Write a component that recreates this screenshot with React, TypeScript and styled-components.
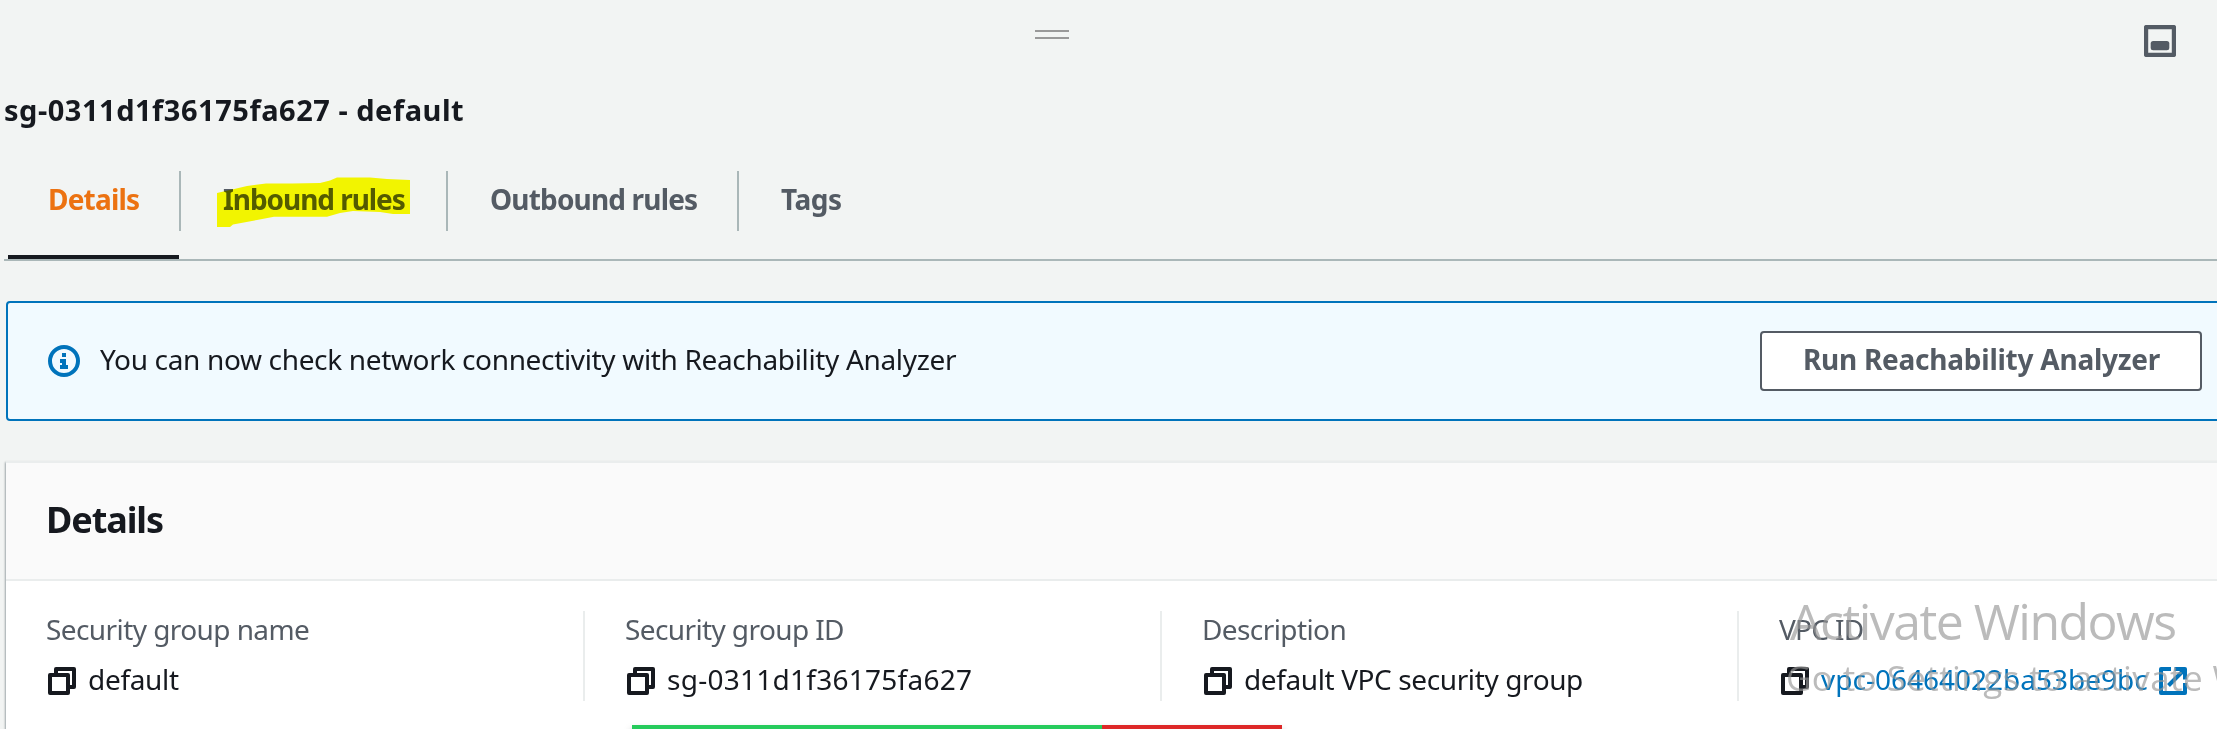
import React from 'react';
import styled, { createGlobalStyle } from 'styled-components';

const GlobalStyle = createGlobalStyle`
  *, *::before, *::after { box-sizing: border-box; }
  body { margin: 0; background: #f2f4f3; overflow: hidden; }
`;

const Page = styled.main`
  position: relative;
  width: 2217px;
  height: 729px;
  overflow: hidden;
  background: #f2f4f3;
  color: #16191f;
  font-family: 'Noto Sans', 'Open Sans', sans-serif;
  font-size: 28px;
  line-height: 40px;
  white-space: nowrap;
`;

const PanelBar = styled.header`
  display: flex;
  justify-content: space-between;
  align-items: flex-start;
  height: 90px;
  padding: 25px 41px 0 1035px;
`;

const DragHandle = styled.div`
  width: 34px;
  height: 9px;
  margin-top: 5px;
  border: solid #999;
  border-width: 2px 0;
`;

const Title = styled.h1`
  margin: 0;
  padding-left: 4px;
  font-size: 29px;
  font-weight: 700;
  line-height: 40px;
  letter-spacing: 0.52px;
`;

const TabList = styled.nav`
  display: flex;
  height: 131px;
  margin-left: 4px;
  padding: 41px 0 0 4px;
  border-bottom: 2px solid #aab7b8;
`;

const Tab = styled.div<{ $width: number; $active?: boolean }>`
  position: relative;
  width: ${(p) => p.$width}px;
  height: 88px;
  color: ${(p) => (p.$active ? '#ec7211' : '#545b64')};

  &::after {
    content: '';
    display: ${(p) => (p.$active ? 'block' : 'none')};
    width: 171px;
    height: 4px;
    margin-top: 24px;
    background: #16191f;
  }
`;

const TabLabel = styled.div<{ $inset: number; $spacing: number; $last?: boolean }>`
  height: 60px;
  padding: 8px 0 0 ${(p) => p.$inset}px;
  border-right: ${(p) => (p.$last ? 'none' : '2px solid #aab7b8')};
  font-weight: 700;
  letter-spacing: ${(p) => p.$spacing}px;
`;

const Marker = styled.svg`
  position: absolute;
  left: 36px;
  top: 6px;
  mix-blend-mode: multiply;
`;

const Alert = styled.section`
  display: flex;
  align-items: center;
  height: 120px;
  margin: 40px -4px 0 6px;
  padding: 0 17px 0 40px;
  border: 2px solid #0073bb;
  border-radius: 4px;
  background: #f1faff;
`;

const AlertText = styled.p`
  flex: 1;
  margin: 0 0 4px 20px;
  letter-spacing: -0.34px;
`;

const Button = styled.button`
  width: 442px;
  height: 60px;
  padding: 0 0 4px 1px;
  border: 2px solid #545b64;
  border-radius: 4px;
  background: #fff;
  color: #545b64;
  font: 700 28px/40px 'Noto Sans', 'Open Sans', sans-serif;
  letter-spacing: -0.24px;
`;

const Card = styled.section`
  height: 300px;
  margin: 40px -4px 0 6px;
  border-top: 2px solid #eaeded;
  background: #fff;
  box-shadow: 0 2px 2px rgba(0, 28, 36, 0.3), -1px 1px 2px rgba(0, 28, 36, 0.25);
`;

const CardHeader = styled.div`
  height: 118px;
  padding: 33px 0 0 40px;
  border-bottom: 2px solid #eaeded;
  background: #fafafa;
`;

const CardTitle = styled.h2`
  margin: 0;
  font-size: 36px;
  font-weight: 700;
  line-height: 48px;
  letter-spacing: -1.09px;
`;

const Fields = styled.div`
  display: grid;
  grid-template-columns: 579px 577px 577px 1fr;
  height: 90px;
  margin-top: 30px;
`;

const Field = styled.div`
  padding-left: 40px;
  border-right: 2px solid #eaeded;
  &:last-child { border-right: none; }
`;

const FieldLabel = styled.div<{ $spacing: number }>`
  height: 40px;
  margin-top: -2px;
  color: #545b64;
  letter-spacing: ${(p) => p.$spacing}px;
`;

const FieldValue = styled.div<{ $spacing: number; $link?: boolean }>`
  display: flex;
  align-items: flex-start;
  margin-top: 10px;
  color: ${(p) => (p.$link ? '#0073bb' : '#16191f')};
  letter-spacing: ${(p) => p.$spacing}px;

  svg { flex: none; margin-top: 8px; }
`;

const ValueText = styled.span`
  margin: 0 11px 0 12px;
`;

const StatusStrip = styled.div`
  position: absolute;
  left: 632px;
  top: 725px;
  width: 650px;
  height: 14px;
  display: grid;
  grid-template-columns: 470px 180px;
  box-shadow: 0 6px 8px rgba(0, 0, 0, 0.4);
`;

const Segment = styled.div<{ $color: string }>`
  background: ${(p) => p.$color};
`;

const Watermark = styled.aside`
  position: absolute;
  left: 1790px;
  top: 588px;
  color: rgba(150, 150, 150, 0.65);
  font-family: 'Open Sans', 'Noto Sans', sans-serif;
`;

const WatermarkTitle = styled.div`
  font-size: 50px;
  font-weight: 400;
  line-height: 66px;
  letter-spacing: -1.55px;
`;

const WatermarkHint = styled.div`
  margin-left: -4px;
  font-size: 35px;
  font-weight: 400;
  line-height: 48px;
  letter-spacing: 0.41px;
`;

const CopyIcon = () => (
  <svg width="30" height="28" viewBox="-2 0 30 28" fill="#fff" stroke="#16191f" strokeWidth="4" strokeLinejoin="round">
    <rect x="8" y="2" width="18" height="18" />
    <rect x="2" y="8" width="18" height="18" />
  </svg>
);

const ExternalIcon = () => (
  <svg width="28" height="28" viewBox="0 0 28 28" fill="none" stroke="#0073bb" strokeWidth="4" strokeLinejoin="round">
    <path d="M12 2H2V26H26V16" />
    <path d="M15.5 2H26V12.5" />
    <path d="M25 3L9.5 18.5" />
  </svg>
);

const InfoIcon = () => (
  <svg width="32" height="32" viewBox="0 0 32 32" fill="#0073bb">
    <circle cx="16" cy="16" r="14" fill="none" stroke="#0073bb" strokeWidth="4" />
    <path d="M14 8h4v4h-4zM12 14h6v6h2v4h-8v-4h2v-2h-2z" />
  </svg>
);

const SplitPanelIcon = () => (
  <svg width="32" height="32" viewBox="0 0 32 32" fill="#545b64">
    <rect x="2" y="2" width="28" height="28" rx="1" fill="none" stroke="#545b64" strokeWidth="4.4" />
    <rect x="6.7" y="16" width="18.6" height="9.3" rx="2.5" />
  </svg>
);

const tabs = [
  { label: 'Details', width: 173, inset: 40, spacing: -0.81, active: true },
  { label: 'Inbound rules', width: 267, inset: 42, spacing: -1.06, marked: true },
  { label: 'Outbound rules', width: 291, inset: 42, spacing: -0.83 },
  { label: 'Tags', width: 140, inset: 42, spacing: -0.46, last: true },
];

const fields = [
  { label: 'Security group name', labelSpacing: -0.58, value: 'default', spacing: -0.31 },
  { label: 'Security group ID', labelSpacing: -0.61, value: 'sg-0311d1f36175fa627', spacing: 0.26 },
  { label: 'Description', labelSpacing: -0.59, value: 'default VPC security group', spacing: -0.39 },
  { label: 'VPC ID', labelSpacing: -0.7, value: 'vpc-06464022ba53be9bc', spacing: 0, link: true },
];

export default function App() {
  return (
    <Page>
      <GlobalStyle />
      <PanelBar>
        <DragHandle />
        <SplitPanelIcon />
      </PanelBar>
      <Title>sg-0311d1f36175fa627 - default</Title>
      <TabList>
        {tabs.map((t) => (
          <Tab key={t.label} $width={t.width} $active={t.active}>
            <TabLabel $inset={t.inset} $spacing={t.spacing} $last={t.last}>{t.label}</TabLabel>
            {t.marked && (
              <Marker width="193" height="50" viewBox="0 0 193 50">
                <path
                  fill="#ffff00"
                  d="M0 16L13 13L30 9L49 6.5H75L103 6L113 3.5L120 0.5H153L170 2L193 3V37H176L163 35L136 34L123 36L110 39.7H57L40 43L16 47.5L13 50H0Z"
                />
              </Marker>
            )}
          </Tab>
        ))}
      </TabList>
      <Alert>
        <InfoIcon />
        <AlertText>You can now check network connectivity with Reachability Analyzer</AlertText>
        <Button>Run Reachability Analyzer</Button>
      </Alert>
      <Card>
        <CardHeader>
          <CardTitle>Details</CardTitle>
        </CardHeader>
        <Fields>
          {fields.map((f) => (
            <Field key={f.label}>
              <FieldLabel $spacing={f.labelSpacing}>{f.label}</FieldLabel>
              <FieldValue $spacing={f.spacing} $link={f.link}>
                <CopyIcon />
                <ValueText>{f.value}</ValueText>
                {f.link && <ExternalIcon />}
              </FieldValue>
            </Field>
          ))}
        </Fields>
      </Card>
      <StatusStrip>
        <Segment $color="#26cb5c" />
        <Segment $color="#dd2727" />
      </StatusStrip>
      <Watermark>
        <WatermarkTitle>Activate Windows</WatermarkTitle>
        <WatermarkHint>Go to Settings to activate Windows.</WatermarkHint>
      </Watermark>
    </Page>
  );
}
